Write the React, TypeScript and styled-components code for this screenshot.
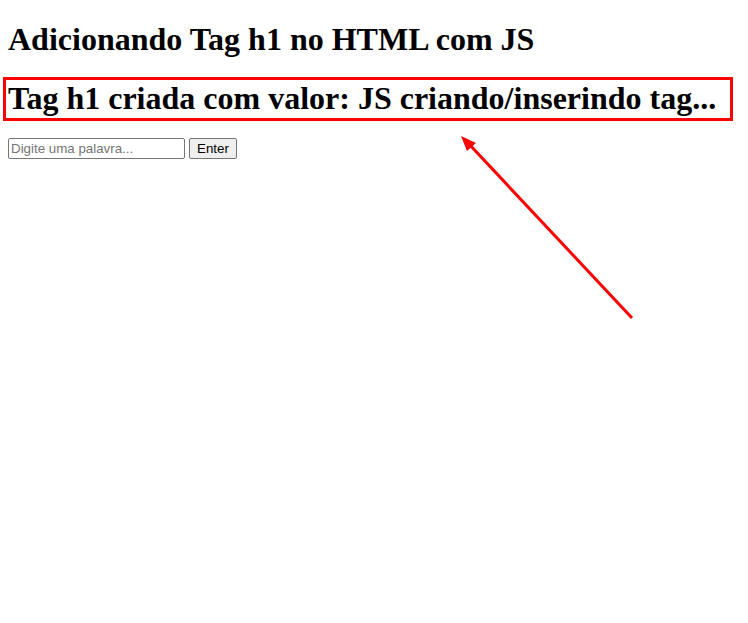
import React from "react";
import styled, { createGlobalStyle } from "styled-components";

const Global = createGlobalStyle`
  html, body { margin: 0; padding: 0; background: #fff; }
  body { font-family: "Liberation Serif", "Times New Roman", serif; }
`;

const Page = styled.div`
  position: relative;
  width: 748px;
  height: 623px;
  padding: 0 8px;
  box-sizing: border-box;
  overflow: hidden;
`;

const Title = styled.h1`
  font-family: "Liberation Serif", "Times New Roman", serif;
  font-size: 32px;
  font-weight: bold;
  margin: 21.44px 0;
  line-height: normal;
  color: #000;
`;

const FormRow = styled.div`
  display: flex;
  align-items: center;
  gap: 4px;
`;

const WordInput = styled.input`
  width: 177px;
  height: 21px;
  box-sizing: border-box;
  border: 1px solid #767676;
  border-radius: 2px;
  padding: 1px 2px;
  font-family: "Liberation Sans", Arial, sans-serif;
  font-size: 13.333px;
  color: #000;
  &::placeholder { color: #757575; }
`;

const EnterButton = styled.button`
  width: 48px;
  height: 21px;
  box-sizing: border-box;
  border: 1px solid #767676;
  border-radius: 2px;
  background: #efefef;
  padding: 1px 6px;
  font-family: "Liberation Sans", Arial, sans-serif;
  font-size: 13.333px;
  color: #000;
`;

const Highlight = styled.div`
  position: absolute;
  left: 3px;
  top: 77px;
  width: 730px;
  height: 44px;
  border: 3px solid #ff0000;
  box-sizing: border-box;
  pointer-events: none;
`;

const ArrowLayer = styled.svg`
  position: absolute;
  left: 0;
  top: 0;
  pointer-events: none;
`;

export default function App() {
  return (
    <>
      <Global />
      <Page>
        <Title>Adicionando Tag h1 no HTML com JS</Title>
        <Title>Tag h1 criada com valor: JS criando/inserindo tag...</Title>
        <FormRow>
          <WordInput type="text" placeholder="Digite uma palavra..." />
          <EnterButton type="button">Enter</EnterButton>
        </FormRow>
        <Highlight />
        <ArrowLayer width="748" height="623" viewBox="0 0 748 623">
          <line x1="632" y1="318" x2="468" y2="143" stroke="#ff0000" strokeWidth="3" />
          <polygon points="461,136 476,143 467,151" fill="#ff0000" />
        </ArrowLayer>
      </Page>
    </>
  );
}
